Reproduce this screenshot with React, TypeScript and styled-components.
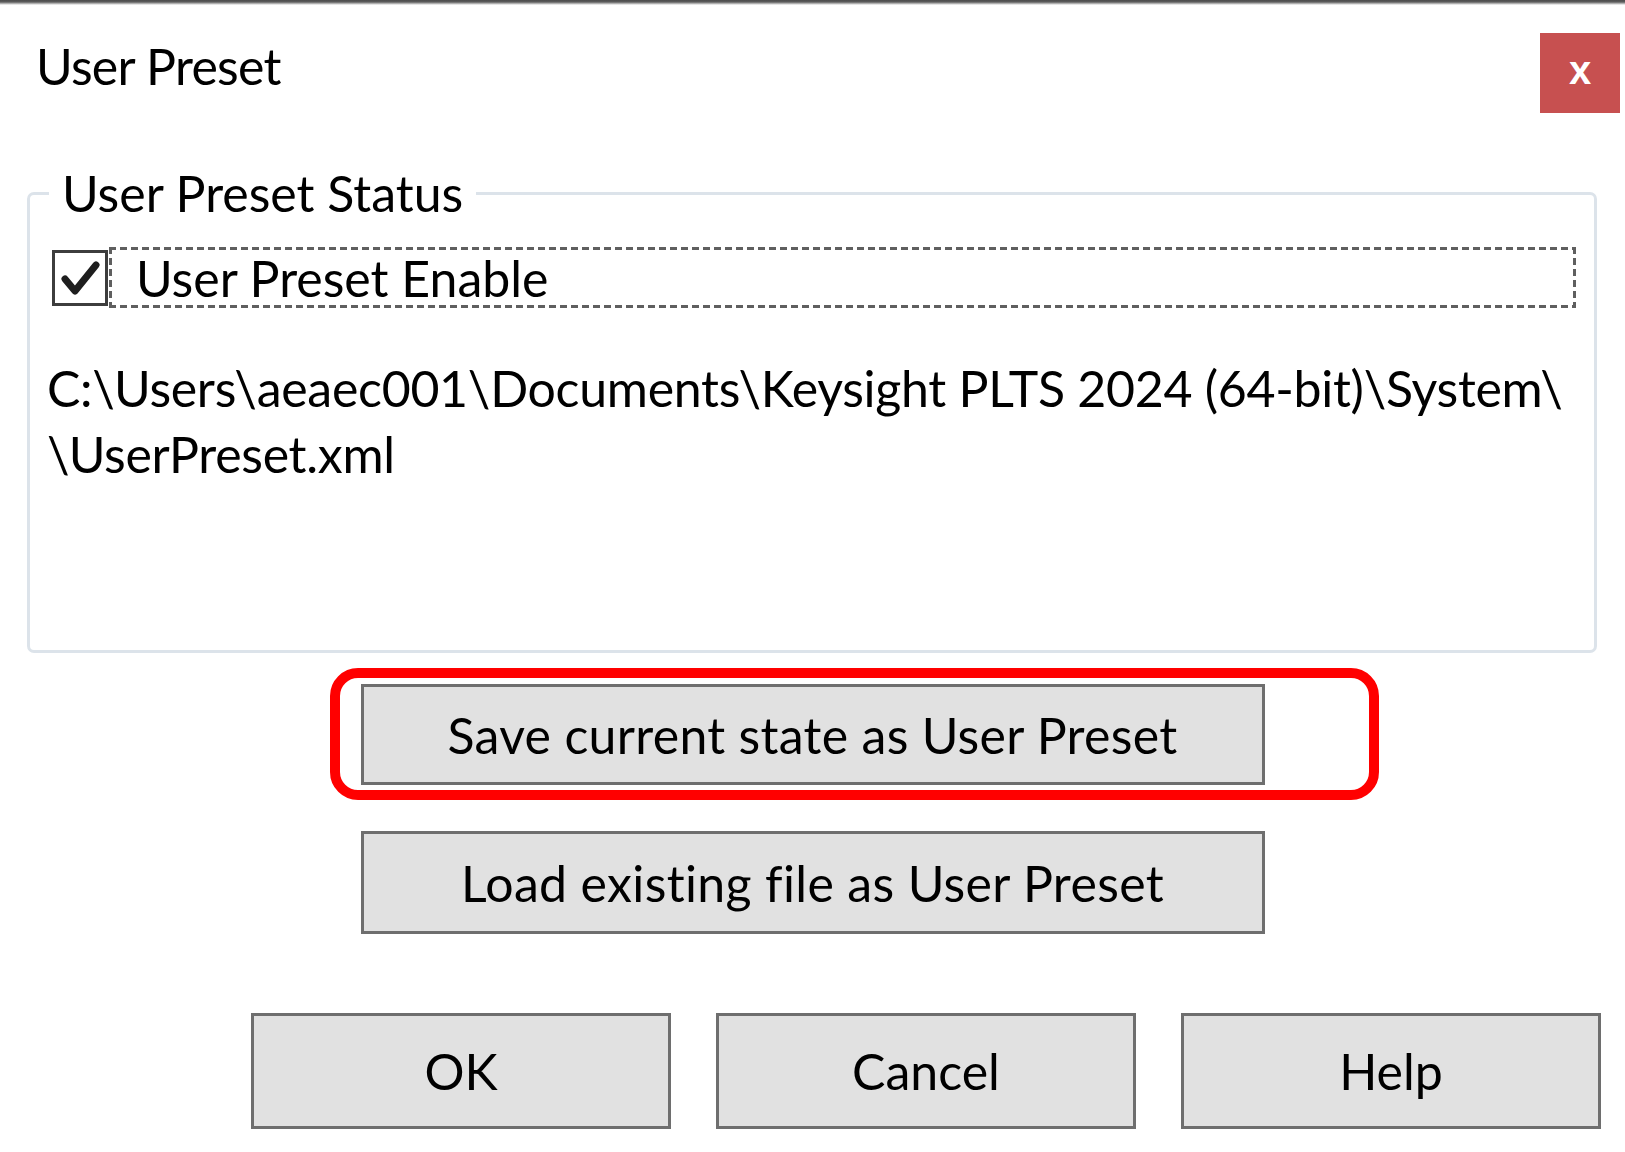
import React from "react";
import styled, { createGlobalStyle } from "styled-components";

const FONT = `"Lato", "Open Sans", "DejaVu Sans", sans-serif`;

const Global = createGlobalStyle`
  html, body { margin: 0; padding: 0; background: #ffffff; }
  body { font-family: ${FONT}; color: #000; }
  * { box-sizing: border-box; }
`;

const Window = styled.div`
  width: 1625px;
  height: 1152px;
  background: #ffffff;
  display: flex;
  flex-direction: column;
  overflow: hidden;
`;

const TopEdge = styled.div`
  flex: none;
  height: 5px;
  background: linear-gradient(#4b4b4b 0, #5e5e5e 40%, #bdbdbd 75%, #ffffff 100%);
`;

const Header = styled.header`
  flex: none;
  height: 158px;
  display: flex;
  justify-content: space-between;
  align-items: flex-start;
  padding: 28px 5px 0 36px;
`;

const Title = styled.h1`
  margin: 3px 0 0 0;
  font-size: 50px;
  line-height: 60px;
  font-weight: 400;
  letter-spacing: -0.7px;
  color: #000;
`;

const CloseButton = styled.button`
  width: 80px;
  height: 80px;
  border: none;
  padding: 0 0 6px 0;
  background: #c75050;
  color: #ffffff;
  font-family: "Liberation Sans", Arial, sans-serif;
  font-weight: 700;
  font-size: 40px;
  line-height: 1;
  display: flex;
  align-items: center;
  justify-content: center;
`;

const GroupBox = styled.fieldset`
  margin: 0 28px 0 27px;
  padding: 0 18px 0 19px;
  height: 490px;
  min-width: 0;
  border: 3px solid #dce3ea;
  border-radius: 7px;
`;

const Legend = styled.legend`
  padding: 0 13px;
  font-size: 50px;
  line-height: 60px;
  color: #000;
`;

const CheckRow = styled.label`
  margin-top: 24px;
  height: 61px;
  display: flex;
  align-items: center;
`;

const CheckBox = styled.span`
  flex: none;
  width: 56px;
  height: 56px;
  margin-left: 3px;
  border: 3px solid #3d3d3d;
  background: #ffffff;
  display: flex;
  align-items: center;
  justify-content: center;
`;

const dash = (dir: string) =>
  `repeating-linear-gradient(${dir}, #5f5f5f 0 7px, transparent 7px 11px)`;

const FocusLabel = styled.span`
  flex: 1;
  height: 61px;
  margin-left: 1px;
  padding-left: 27px;
  display: flex;
  align-items: center;
  font-size: 50px;
  line-height: 60px;
  background:
    ${dash("90deg")} left top / 100% 3px no-repeat,
    ${dash("90deg")} left bottom / 100% 3px no-repeat,
    ${dash("180deg")} left top / 3px 100% no-repeat,
    ${dash("180deg")} right top / 3px 100% no-repeat;
`;

const PathText = styled.p`
  margin: 47px 0 0 -2px;
  font-size: 50px;
  line-height: 66px;
  letter-spacing: -0.28px;
  color: #000;
  white-space: nowrap;
`;

const Actions = styled.div`
  margin-top: 31px;
  display: flex;
  flex-direction: column;
  align-items: center;
  gap: 46px;
`;

const Highlight = styled.div`
  position: relative;
  &::after {
    content: "";
    position: absolute;
    top: -16px;
    left: -31px;
    right: -114px;
    bottom: -15px;
    border: 10px solid #ff0000;
    border-radius: 28px;
    pointer-events: none;
  }
`;

const Button = styled.button<{ $w: number; $h: number; $ls?: number }>`
  width: ${(p) => p.$w}px;
  height: ${(p) => p.$h}px;
  padding: 0;
  border: 3px solid #6e6e6e;
  background: #e1e1e1;
  color: #000;
  font-family: ${FONT};
  font-size: 50px;
  line-height: 60px;
  letter-spacing: ${(p) => p.$ls ?? 0}px;
  display: flex;
  align-items: center;
  justify-content: center;
`;

const Footer = styled.div`
  margin-top: 79px;
  display: flex;
  justify-content: flex-end;
  gap: 45px;
  padding-right: 24px;
`;

const Check = () => (
  <svg width="44" height="44" viewBox="0 0 44 44">
    <polyline
      points="7,23 17,35 38,9"
      fill="none"
      stroke="#1e1e1e"
      strokeWidth="7"
      strokeLinecap="round"
      strokeLinejoin="round"
    />
  </svg>
);

export default function App() {
  return (
    <>
      <Global />
      <Window>
        <TopEdge />
        <Header>
          <Title>User Preset</Title>
          <CloseButton aria-label="Close">x</CloseButton>
        </Header>
        <GroupBox>
          <Legend>User Preset Status</Legend>
          <CheckRow>
            <CheckBox>
              <Check />
            </CheckBox>
            <FocusLabel>User Preset Enable</FocusLabel>
          </CheckRow>
          <PathText>
            C:\Users\aeaec001\Documents\Keysight PLTS 2024 (64-bit)\System\
            <br />
            \UserPreset.xml
          </PathText>
        </GroupBox>
        <Actions>
          <Highlight>
            <Button $w={904} $h={101} $ls={0.3}>Save current state as User Preset</Button>
          </Highlight>
          <Button $w={904} $h={103} $ls={0.35}>Load existing file as User Preset</Button>
        </Actions>
        <Footer>
          <Button $w={420} $h={116}>OK</Button>
          <Button $w={420} $h={116}>Cancel</Button>
          <Button $w={420} $h={116}>Help</Button>
        </Footer>
      </Window>
    </>
  );
}
